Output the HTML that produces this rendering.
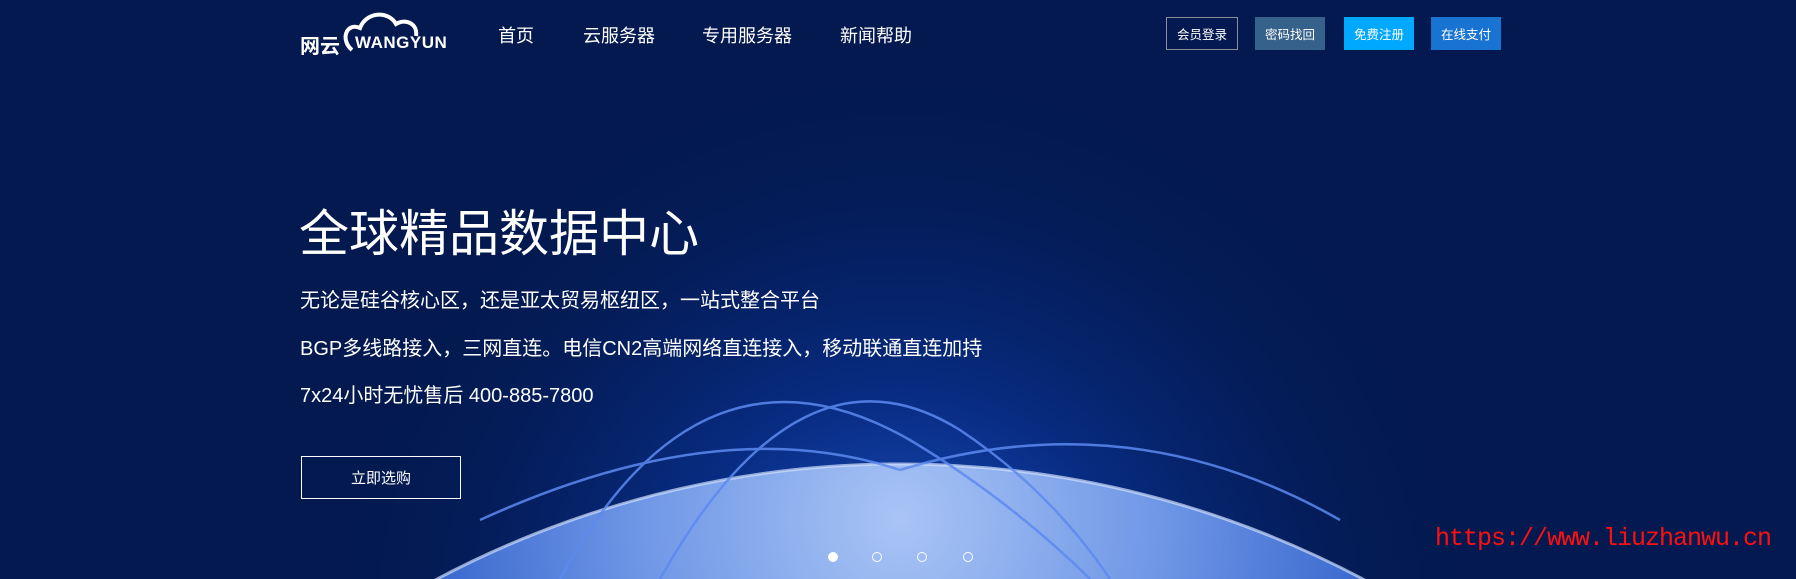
<!DOCTYPE html>
<html><head><meta charset="utf-8"><style>
*{margin:0;padding:0;box-sizing:border-box}
html,body{width:1796px;height:579px;overflow:hidden}
body{background:#03194f;font-family:"Liberation Sans","Noto Sans CJK SC",sans-serif;color:#fff;position:relative}
.a{position:absolute;white-space:nowrap}
.nav{font-size:18px;top:22px}
.btn{top:17px;height:33px;font-size:12.5px;display:flex;align-items:center;justify-content:center}
</style></head><body>
<svg class="a" style="left:0;top:0" width="1796" height="579">
<defs>
<radialGradient id="glow" cx="900" cy="640" r="600" gradientUnits="userSpaceOnUse">
<stop offset="0" stop-color="#2a6cf0" stop-opacity="0.9"/>
<stop offset="0.4" stop-color="#0c3aa8" stop-opacity="0.6"/>
<stop offset="1" stop-color="#03194f" stop-opacity="0"/>
</radialGradient>
<radialGradient id="earth" cx="900" cy="520" r="520" gradientUnits="userSpaceOnUse">
<stop offset="0" stop-color="#a9c4f5"/>
<stop offset="0.5" stop-color="#6f97e6"/>
<stop offset="1" stop-color="#2d5cc8"/>
</radialGradient>
</defs>
<rect x="0" y="0" width="1796" height="579" fill="url(#glow)"/>
<circle cx="900" cy="1453" r="989" fill="url(#earth)"/>
<circle cx="900" cy="1453" r="989" fill="none" stroke="#cfe0ff" stroke-width="3" opacity="0.7"/>
<g fill="none" stroke="#5d8af0" stroke-width="2.5" opacity="0.85">
<path d="M560 579 Q700 320 910 440 Q1010 500 1090 579"/>
<path d="M660 579 Q800 330 960 430 Q1050 490 1110 579"/>
<path d="M480 520 Q720 410 900 470"/>
<path d="M900 470 Q1130 400 1340 520"/>
</g>
</svg>
<div class="a" style="left:300px;top:30px;font-size:20px;font-weight:bold">网云</div>
<svg class="a" style="left:338px;top:10px" width="110" height="45"><path d="M14 40 C2 30 8 12 22 18 C28 2 50 0 58 14 C68 8 80 14 78 26" fill="none" stroke="#fff" stroke-width="4"/></svg>
<div class="a" style="left:355px;top:33px;font-size:17px;font-weight:bold;letter-spacing:0.5px">WANGYUN</div>
<div class="a nav" style="left:498px">首页</div>
<div class="a nav" style="left:583px">云服务器</div>
<div class="a nav" style="left:702px">专用服务器</div>
<div class="a nav" style="left:840px">新闻帮助</div>
<div class="a btn" style="left:1166px;width:72px;border:1px solid #8a8f9c">会员登录</div>
<div class="a btn" style="left:1255px;width:70px;background:#36618b">密码找回</div>
<div class="a btn" style="left:1344px;width:70px;background:#00a8ff">免费注册</div>
<div class="a btn" style="left:1431px;width:70px;background:#1973d3">在线支付</div>
<div class="a" style="left:299px;top:202px;font-size:50px;line-height:64px">全球精品数据中心</div>
<div class="a" style="left:300px;top:284px;font-size:20px">无论是硅谷核心区，还是亚太贸易枢纽区，一站式整合平台</div>
<div class="a" style="left:300px;top:332px;font-size:20px">BGP多线路接入，三网直连。电信CN2高端网络直连接入，移动联通直连加持</div>
<div class="a" style="left:300px;top:379px;font-size:20px">7x24小时无忧售后 400-885-7800</div>
<div class="a" style="left:301px;top:456px;width:160px;height:43px;border:1px solid #fff;font-size:15px;display:flex;align-items:center;justify-content:center">立即选购</div>
<div class="a" style="left:828px;top:552px;width:10px;height:10px;border-radius:50%;background:#fff"></div>
<div class="a" style="left:872px;top:552px;width:10px;height:10px;border-radius:50%;border:1.5px solid #fff"></div>
<div class="a" style="left:917px;top:552px;width:10px;height:10px;border-radius:50%;border:1.5px solid #fff"></div>
<div class="a" style="left:963px;top:552px;width:10px;height:10px;border-radius:50%;border:1.5px solid #fff"></div>
<div class="a" style="left:1435px;top:524px;font-size:25px;color:#ff1010;font-family:'Liberation Mono',monospace;letter-spacing:-1px">https://www.liuzhanwu.cn</div>
</body></html>
